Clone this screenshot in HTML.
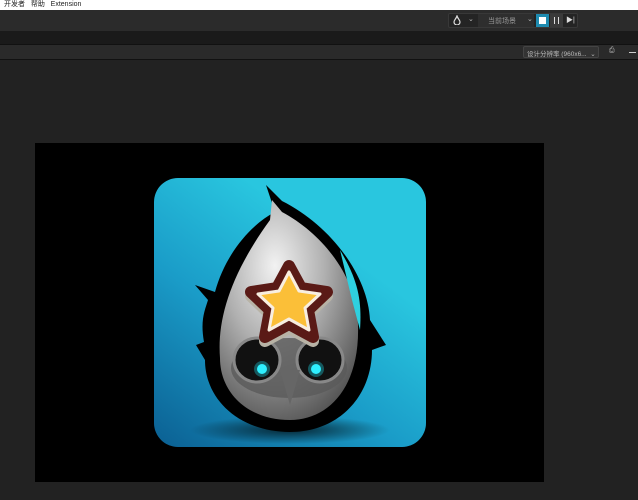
<!DOCTYPE html>
<html><head><meta charset="utf-8"><style>
body{margin:0;width:638px;height:500px;overflow:hidden;background:#222;font-family:"Liberation Sans","Noto Sans CJK SC",sans-serif;position:relative}
div{position:absolute;box-sizing:border-box}
.t{font-size:7px;color:#bbb;white-space:nowrap}
</style></head><body>
<div style="left:0;top:0;width:638px;height:10px;background:#fff;font-size:7px;color:#222;padding-left:4px;line-height:10px">开发者&nbsp;&nbsp;&nbsp;帮助&nbsp;&nbsp;&nbsp;Extension</div>
<div style="left:0;top:10px;width:638px;height:21px;background:#2b2b2b"></div>
<div style="left:0;top:31px;width:638px;height:13px;background:#1a1a1a"></div>
<div style="left:0;top:44px;width:638px;height:16px;background:#2a2a2a;border-top:1px solid #111;border-bottom:1px solid #111"></div>
<div style="left:448px;top:13px;width:130px;height:15px;background:#242424;border:1px solid #383838;border-radius:2px"></div>
<svg style="position:absolute;left:453px;top:15px" width="8" height="10"><path d="M4,1 C5,4 7,5 7,7 A3,3 0 0 1 1,7 C1,5 3,4 4,1 Z" fill="none" stroke="#ddd" stroke-width="1.2"/></svg>
<div class="t" style="left:468px;top:15px">⌄</div>
<div style="left:478px;top:14px;width:56px;height:13px;background:#2e2e2e"></div>
<div class="t" style="left:488px;top:16px;color:#999">当前场景</div>
<div class="t" style="left:527px;top:15px">⌄</div>
<div style="left:536px;top:14px;width:13px;height:13px;background:#1e8bb0;padding:2px"><div style="left:3px;top:3px;width:7px;height:7px;background:#fff"></div></div>
<div style="left:550px;top:14px;width:13px;height:13px;background:#3a3a3a"><div style="left:4px;top:3px;width:1px;height:7px;background:#ddd"></div><div style="left:8px;top:3px;width:1px;height:7px;background:#ddd"></div></div>
<div class="t" style="left:566px;top:15px;color:#ddd">▶|</div>
<div style="left:523px;top:46px;width:76px;height:12px;background:#333;border:1px solid #444;border-radius:2px"></div>
<div class="t" style="left:527px;top:48px;font-size:6.5px">设计分辨率 (960x6...&nbsp; ⌄</div>
<div class="t" style="left:609px;top:47px">⎙</div>
<div style="left:629px;top:52px;width:7px;height:1px;background:#ccc"></div>
<div style="left:35px;top:143px;width:509px;height:339px;background:#000"></div>
<svg style="position:absolute;left:0;top:0" width="638" height="500">
<defs>
<linearGradient id="bg" x1="0" y1="1" x2="0.6" y2="0.2"><stop offset="0" stop-color="#0b5f92"/><stop offset="0.55" stop-color="#1a9cc8"/><stop offset="1" stop-color="#29c6df"/></linearGradient>
<radialGradient id="eg" cx="0.4" cy="0.3" r="0.8"><stop offset="0" stop-color="#f2f2f2"/><stop offset="0.45" stop-color="#b0b0b0"/><stop offset="1" stop-color="#4a4a4a"/></radialGradient>
<radialGradient id="sh" cx="0.5" cy="0.5" r="0.5"><stop offset="0" stop-color="#000" stop-opacity="0.7"/><stop offset="1" stop-color="#000" stop-opacity="0"/></radialGradient>
</defs>
<rect x="154" y="178" width="272" height="269" rx="24" fill="url(#bg)"/>
<ellipse cx="290" cy="430" rx="100" ry="14" fill="url(#sh)"/>
<path d="M266,185 L282,201 C330,225 368,275 370,320 L386,345 L372,350 C372,395 340,432 290,432 C240,432 205,400 205,360 L196,345 L204,342 C200,320 205,310 208,300 L195,285 L215,292 C225,255 250,225 275,212 Z" fill="#000"/>
<path d="M272,200 L282,212 C325,235 358,280 358,325 C360,388 328,420 290,420 C248,420 220,393 220,358 C217,320 230,275 270,220 Z" fill="url(#eg)"/>
<path d="M340,250 C358,280 362,300 360,330 L352,300 Z" fill="#2fd0df"/>
<ellipse cx="289" cy="368" rx="58" ry="30" fill="#5a5a5a" opacity="0.8"/>
<ellipse cx="257" cy="360" rx="23" ry="22" fill="#111" stroke="#888" stroke-width="3"/>
<ellipse cx="320" cy="360" rx="23" ry="22" fill="#111" stroke="#888" stroke-width="3"/>
<path d="M280,370 L290,405 L300,370 Z" fill="#666"/>
<circle cx="262" cy="369" r="8" fill="#1ce0f0" opacity="0.35"/><circle cx="262" cy="369" r="5" fill="#2ff0ff"/>
<circle cx="316" cy="369" r="8" fill="#1ce0f0" opacity="0.35"/><circle cx="316" cy="369" r="5" fill="#2ff0ff"/>
<polygon points="289,266 301,288 327,292 308,310 313,337 289,324 265,337 270,310 251,292 277,288" fill="#b8b3a6" stroke="#b8b3a6" stroke-width="12" stroke-linejoin="round" transform="translate(0,4)"/>
<polygon points="289,266 301,288 327,292 308,310 313,337 289,324 265,337 270,310 251,292 277,288" fill="#5a1a16" stroke="#5a1a16" stroke-width="12" stroke-linejoin="round"/>
<polygon points="289,272 299,291 320,294 305,308 309,330 289,319 269,330 273,308 258,294 279,291" fill="#fbbf38" stroke="#f8eee0" stroke-width="3" stroke-linejoin="round"/>
</svg>
</body></html>
